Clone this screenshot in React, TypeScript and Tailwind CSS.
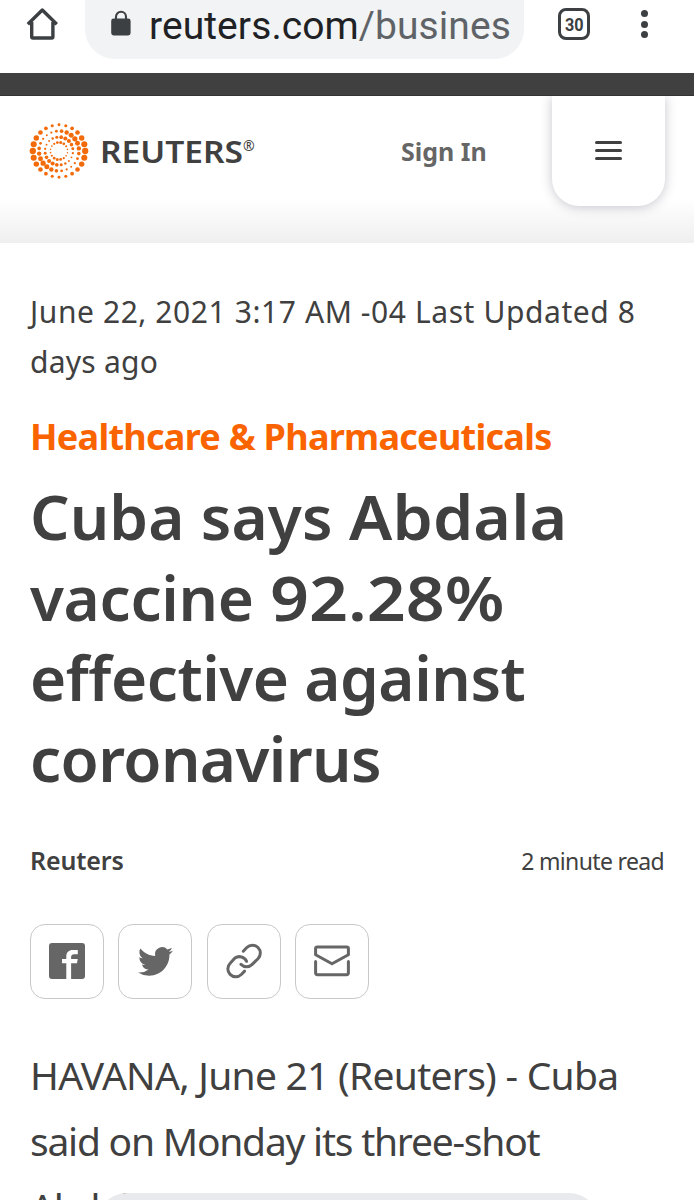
import type { ReactNode } from 'react';

const rings = [
  { radius: 26.2, count: 24, offset: 0, phase: 0, base: 2.3, swing: 0.85 },
  { radius: 20, count: 24, offset: 7.5, phase: 38, base: 1.8, swing: 0.8 },
  { radius: 14, count: 20, offset: 9, phase: 55, base: 1.5, swing: 0.55 },
  { radius: 8.6, count: 16, offset: 11, phase: 80, base: 1.1, swing: 0.4 },
];

function LogoMark() {
  return (
    <svg viewBox="-30 -30 60 60" className="size-[60px] shrink-0" fill="#f26a0a">
      {rings.map((ring) =>
        Array.from({ length: ring.count }, (_, i) => {
          const deg = (i * 360) / ring.count + ring.offset;
          const a = (deg * Math.PI) / 180;
          const r = ring.base + ring.swing * Math.cos(2 * (a - (ring.phase * Math.PI) / 180));
          return (
            <circle key={`${ring.radius}-${i}`} cx={ring.radius * Math.cos(a)} cy={-ring.radius * Math.sin(a)} r={r} />
          );
        }),
      )}
    </svg>
  );
}

function BrowserBar() {
  return (
    <div className="flex h-[73px] items-start bg-white font-['Roboto',sans-serif]">
      <svg viewBox="0 0 34 34" className="mt-[7px] ml-[26px] size-[34px]" fill="none" stroke="#3c4043" strokeWidth="3.4">
        <path d="M1.8 17.2 16.3 3l14.5 14.2M5.7 15v14.8q0 1.2 1.2 1.2h18.8q1.2 0 1.2-1.2V15" strokeLinejoin="round" />
      </svg>
      <div className="ml-[25px] flex h-[59px] w-[439px] items-start rounded-b-[30px] bg-[#f1f3f4] pl-[26px]">
        <svg viewBox="0 0 20 26" className="mt-[10px] h-[26px] w-5 shrink-0">
          <rect x="0.2" y="8.5" width="19.4" height="17" rx="2.4" fill="#3c4043" />
          <path d="M5 10V6.7a5 5 0 0 1 10 0V10" fill="none" stroke="#3c4043" strokeWidth="2.1" />
        </svg>
        <div className="ml-[18px] h-[52px] w-[362px] overflow-hidden text-[39px] leading-[52px] tracking-[0.08px] whitespace-nowrap text-[#202124]">
          reuters.com<span className="text-[#5f6368]">/busines</span>
        </div>
      </div>
      <div className="mt-2 ml-[34px] flex h-8 w-8 items-center justify-center rounded-[8px] border-3 border-[#3c4043] text-[18px] font-bold text-[#3c4043]">
        <span className="scale-x-90">30</span>
      </div>
      <div className="mt-[10px] ml-[51px] flex flex-col gap-[3.5px]">
        <i className="size-[7px] rounded-full bg-[#3c4043]" />
        <i className="size-[7px] rounded-full bg-[#3c4043]" />
        <i className="size-[7px] rounded-full bg-[#3c4043]" />
      </div>
    </div>
  );
}

function SiteHeader() {
  return (
    <header className="flex h-[147px] items-start overflow-hidden bg-linear-to-b from-white from-70% to-[#efefef] pl-[29px]">
      <div className="mt-[25px] flex h-[60px] w-[372px] items-center">
        <LogoMark />
        <span className="ml-[11px] w-[144px] origin-left scale-x-108 text-[31px] font-semibold text-[#404040]">
          REUTERS
        </span>
        <span className="-mt-3 -ml-px text-[14px] text-[#404040]">®</span>
      </div>
      <span className="mt-[37px] w-[151px] text-[25px] leading-9 font-bold whitespace-nowrap text-[#666]">Sign In</span>
      <button className="flex h-[110px] w-[113px] flex-col items-center justify-center gap-[5px] rounded-b-[27px] bg-white shadow-[0_1px_12px_rgba(50,50,80,0.28)]">
        <i className="h-[3px] w-[27px] rounded-full bg-[#404040]" />
        <i className="h-[3px] w-[27px] rounded-full bg-[#404040]" />
        <i className="mb-[2px] h-[3px] w-[27px] rounded-full bg-[#404040]" />
      </button>
    </header>
  );
}

function ShareButton({ children }: { children: ReactNode }) {
  return (
    <button className="flex h-[75px] w-[74px] items-center justify-center rounded-[15px] border border-[#c8c8c8] bg-white">
      {children}
    </button>
  );
}

function ShareRow() {
  return (
    <div className="mt-[40px] flex gap-[14.3px]">
      <ShareButton>
        <svg viewBox="0 0 36 36" className="size-9">
          <rect width="36" height="36" rx="3" fill="#666" />
          <path
            d="M17.3 36V20.2h-4.3v-4.2h4.3v-2.6c0-4.2 2.5-6.5 6.6-6.5h4.9v4.4h-3.4c-2.4 0-3.3 1-3.3 3v1.7h6.6l-.7 4.2h-5.9V36z"
            fill="#fff"
          />
        </svg>
      </ShareButton>
      <ShareButton>
        <svg viewBox="0 0 24 24" className="size-[35px]" fill="#666">
          <path d="M23.953 4.57a10 10 0 01-2.825.775 4.958 4.958 0 002.163-2.723c-.951.555-2.005.959-3.127 1.184a4.92 4.92 0 00-8.384 4.482C7.69 8.095 4.067 6.13 1.64 3.162a4.822 4.822 0 00-.666 2.475c0 1.71.87 3.213 2.188 4.096a4.904 4.904 0 01-2.228-.616v.06a4.923 4.923 0 003.946 4.827 4.996 4.996 0 01-2.212.085 4.936 4.936 0 004.604 3.417 9.867 9.867 0 01-6.102 2.105c-.39 0-.779-.023-1.17-.067a13.995 13.995 0 007.557 2.209c9.053 0 13.998-7.496 13.998-13.985 0-.21 0-.42-.015-.63A9.935 9.935 0 0024 4.59z" />
        </svg>
      </ShareButton>
      <ShareButton>
        <svg viewBox="0 0 36 36" className="size-9" fill="none" stroke="#666" strokeWidth="3" strokeLinecap="round">
          <path d="M17.3 8.2 20.8 4.5A7.9 7.9 0 0 1 32 15.7L26.2 21.4A7.9 7.9 0 0 1 15 21.4" />
          <path d="M20.6 18.3a7.9 7.9 0 0 0-11.6-3.3L4.2 20.2A7.9 7.9 0 0 0 15.3 31.5l3.3-3.4" />
        </svg>
      </ShareButton>
      <ShareButton>
        <svg viewBox="0 0 36 36" className="size-9" fill="none" stroke="#666" strokeWidth="3" strokeLinecap="round" strokeLinejoin="round">
          <path d="M3.3 3.9h29.4q1.7 0 1.7 1.7v6.2L18 20.8 1.6 11.8V5.6q0-1.7 1.7-1.7z" />
          <path d="M1.6 18.6v11.2q0 1.9 1.9 1.9h29q1.9 0 1.9-1.9V18.6" />
        </svg>
      </ShareButton>
    </div>
  );
}

export default function App() {
  return (
    <div className="relative h-[1200px] w-[694px] overflow-hidden bg-white font-['Noto_Sans',sans-serif] text-[#404040]">
      <BrowserBar />
      <div className="h-[23px] border-b border-[#333] bg-[#404040]" />
      <SiteHeader />

      <article className="px-[30px] pt-[44px] whitespace-nowrap">
        <div className="text-[30px] leading-[50px]">
          <span className="block tracking-[0.58px]">June 22, 2021 3:17 AM -04 Last Updated 8</span>
          <span className="block tracking-[0.25px]">days ago</span>
        </div>
        <div className="mt-[25px] text-[36px] leading-[50px] font-bold tracking-[-0.73px] text-[#fa6400]">
          Healthcare &amp; Pharmaceuticals
        </div>
        <h1 className="mt-[14px] text-[62px] leading-[80.7px] font-semibold">
          <span className="block tracking-[0.1px]">
            Cuba says <span className="inline-block origin-left scale-x-104">Abdala</span>
          </span>
          <span className="block tracking-[-0.3px]">
            vaccine <span className="inline-block origin-left scale-x-110 tracking-normal">92.28%</span>
          </span>
          <span className="block tracking-[-0.45px]">effective against</span>
          <span className="block tracking-[-0.6px]">coronavirus</span>
        </h1>
        <div className="mt-[39px] flex h-[46px] items-center justify-between">
          <span className="text-[25px] font-semibold tracking-[-0.15px]">Reuters</span>
          <span className="text-[23px] tracking-[-0.65px]">2 minute read</span>
        </div>
        <ShareRow />
        <div className="mt-[43px] text-[39px] leading-[66px]">
          <span className="block tracking-[-0.74px]">HAVANA, June 21 (Reuters) - Cuba</span>
          <span className="block tracking-[-1.23px]">said on Monday its three-shot</span>
          <span className="block tracking-[-1.2px]">Abdala vaccine against the</span>
        </div>
      </article>

      {/* floating pill over the article bottom */}
      <div className="absolute top-[1193px] left-[97px] h-[60px] w-[502px] rounded-[30px] bg-[#e8eaed]" />
    </div>
  );
}
